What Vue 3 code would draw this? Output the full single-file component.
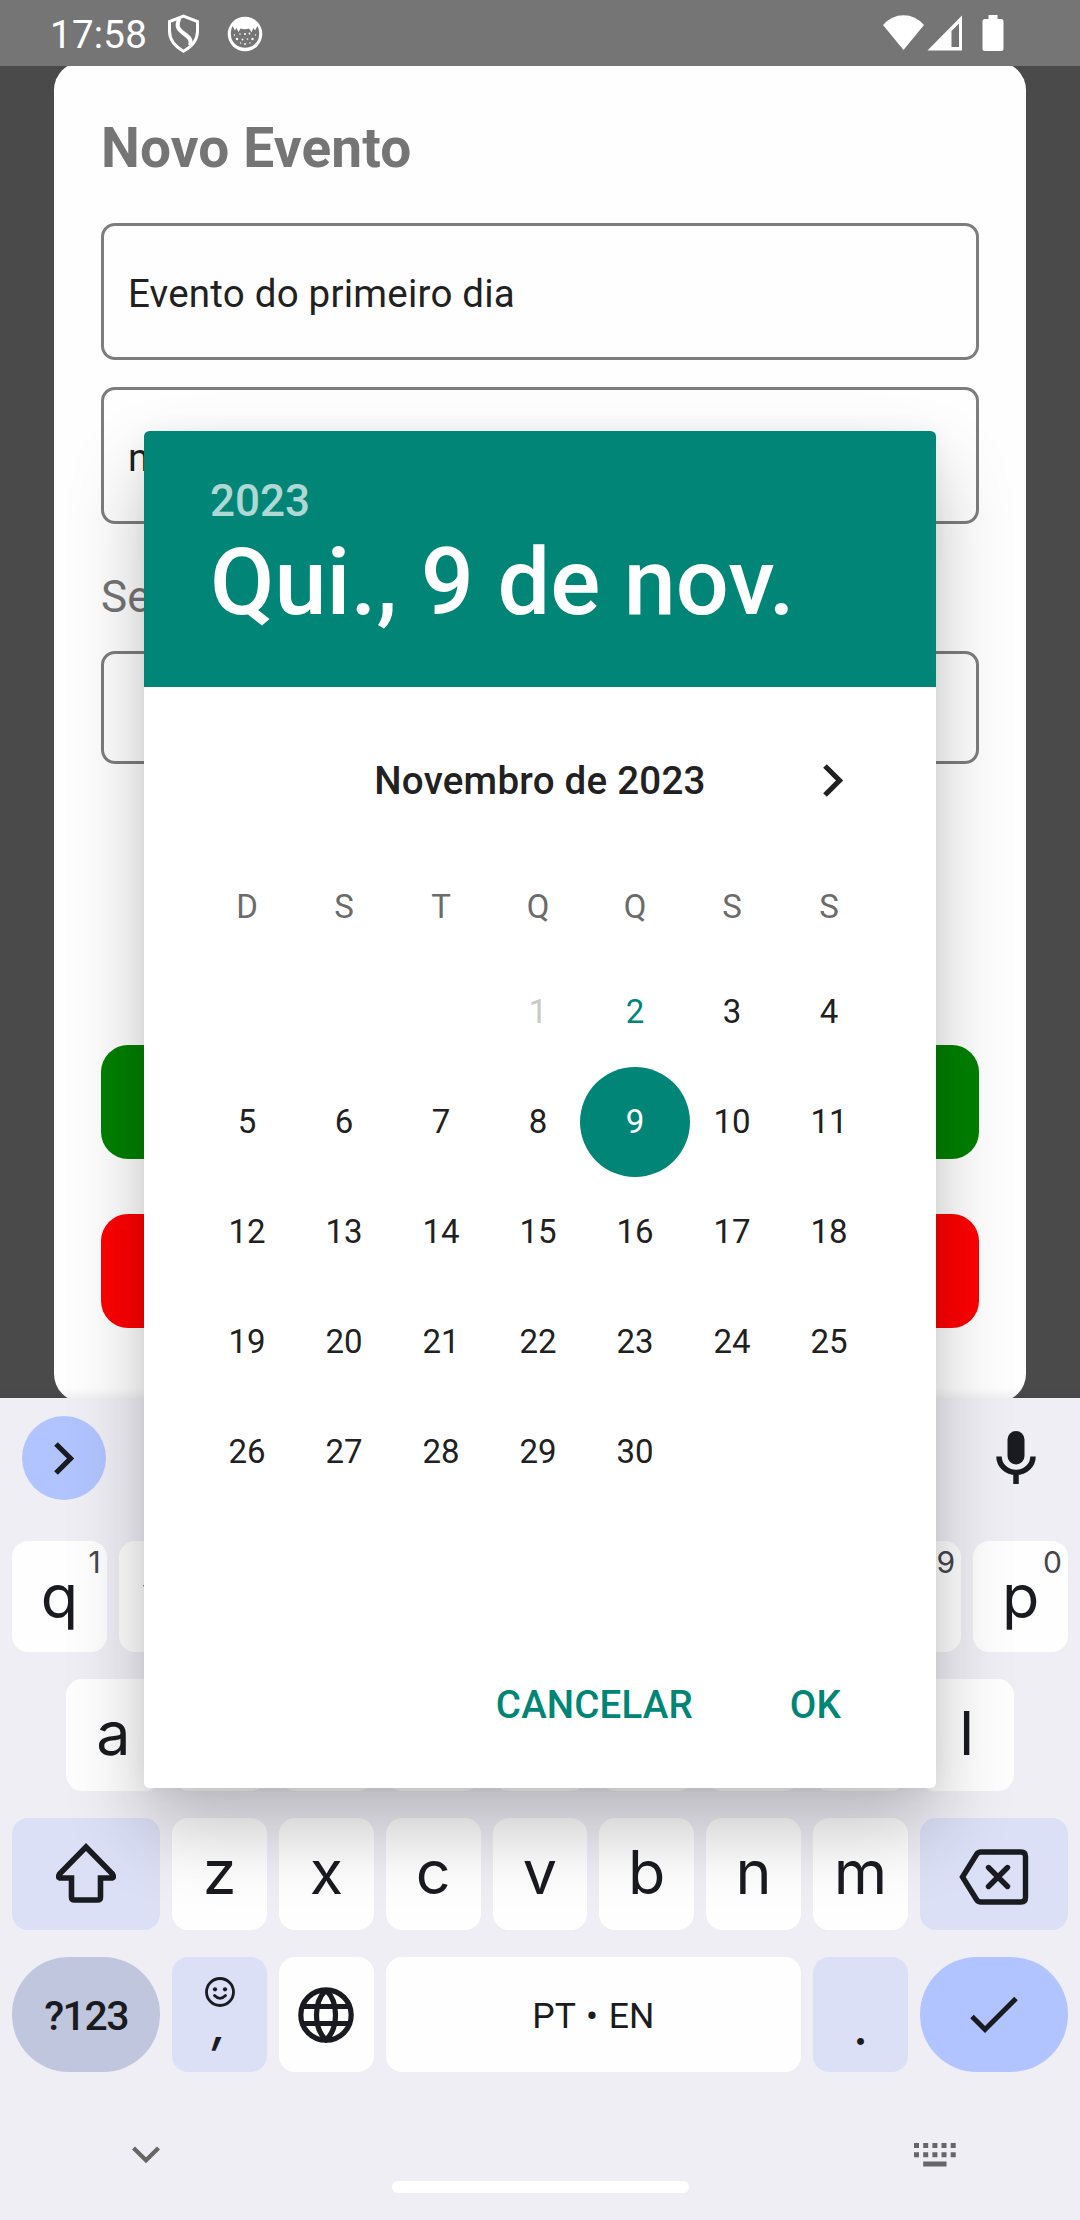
<script setup>
const weekdays = ['D', 'S', 'T', 'Q', 'Q', 'S', 'S']
const leadingBlanks = 3
const today = 2
const selected = 9
const days = Array.from({ length: 30 }, (_, i) => i + 1)

// Keys fully covered by the date dialog carry no label.
const topRow = [
  { letter: 'q', hint: '1' },
  { letter: 'w', hint: '' },
  ...Array.from({ length: 6 }, () => ({ letter: '', hint: '' })),
  { letter: '', hint: '9' },
  { letter: 'p', hint: '0' },
]
const middleRow = ['a', '', '', '', '', '', '', '', 'l']
const bottomRow = [...'zxcvbnm']
</script>

<template>
  <div class="screen">
    <header class="status">
      <span class="clock">17:58</span>
      <svg class="shield" width="33" height="39" viewBox="0 0 33 39" fill="none" stroke="#fff" stroke-width="3">
        <path d="M16.5 2.2 30.5 7.6V17c0 9-5.500 15.500-14 20.200C8 32.500 2.500 26 2.500 17V7.600Z" />
        <path d="M12.300 4.500C9.500 11 10 14.500 15.500 18.500c7 4.800 9.200 7 7.800 13" stroke-width="4" />
      </svg>
      <svg class="face" width="36" height="36" viewBox="0 0 36 36">
        <circle cx="18" cy="18" r="17.300" fill="#fff" />
        <path d="M5.500 10 8 14.500 9.500 12 11.500 16 13.500 12.500Q18 14 22 12.500L24.500 16 26.500 12 28 14.500 30.500 10A14.500 14.500 0 0 1 32 19 14 12.800 0 0 1 4 19 14.500 14.500 0 0 1 5.500 10Z" fill="#757575" />
        <g fill="#fff">
          <circle cx="10" cy="23" r="1.200" /><circle cx="13" cy="18" r="0.800" /><circle cx="18" cy="18" r="1" />
          <circle cx="22.500" cy="17.500" r="0.900" /><circle cx="25.500" cy="23" r="1.200" /><circle cx="15.500" cy="23.500" r="0.900" />
          <circle cx="20.500" cy="23" r="0.800" /><circle cx="18" cy="28" r="0.900" /><circle cx="13.500" cy="27" r="0.700" />
          <circle cx="23" cy="27" r="0.700" /><circle cx="7.500" cy="19" r="0.700" /><circle cx="28.500" cy="19" r="0.700" />
        </g>
      </svg>
      <svg class="signals" width="121" height="37" viewBox="0 0 121 37" fill="#fff">
        <path d="M0 10Q8.500.3 20.500.3T41 10L20.500 35Z" />
        <path fill-rule="evenodd" d="M79 .5V35.500H44.500ZM76 8.500 68.500 16V32H76Z" />
        <path d="M105.500 0h9v4h3.500a2.500 2.500 0 0 1 2.500 2.500v27a2.500 2.500 0 0 1-2.500 2.500h-16a2.500 2.500 0 0 1-2.500-2.500v-27a2.500 2.500 0 0 1 2.500-2.500h3.500Z" />
      </svg>
    </header>

    <main class="stage">
      <section class="card">
        <h1 class="title">Novo Evento</h1>
        <div class="field">Evento do primeiro dia</div>
        <div class="field">n</div>
        <p class="label">Se</p>
        <div class="field short"></div>
        <div class="action save"></div>
        <div class="action discard"></div>
      </section>
    </main>

    <section class="keyboard">
      <div class="toolbar">
        <span class="expand">
          <svg width="20" height="33" viewBox="0 0 20 33" fill="none" stroke="#1a1b20" stroke-width="5.200"><path d="M2 2 16.500 16.500 2 31" /></svg>
        </span>
        <svg class="mic" width="40" height="53" viewBox="0 0 40 53">
          <rect x="11.500" y="0" width="17" height="33.500" rx="8.500" fill="#1a1b20" />
          <path d="M3 25.500a17 16 0 0 0 34 0M20 42v11" fill="none" stroke="#1a1b20" stroke-width="5.500" />
        </svg>
      </div>
      <div class="keys first">
        <span v-for="(k, i) in topRow" :key="i" class="key">{{ k.letter }}<sup v-if="k.hint" class="hint">{{ k.hint }}</sup></span>
      </div>
      <div class="keys middle">
        <span v-for="(k, i) in middleRow" :key="i" class="key">{{ k }}</span>
      </div>
      <div class="keys">
        <span class="key wide tinted">
          <svg class="shift" width="62" height="60" viewBox="0 0 62 60" fill="none" stroke="#1a1b20" stroke-width="5.600">
            <path d="M31 4 57.500 31q2.500 3.800-1.500 4H45.500V54q0 3-3 3h-23q-3 0-3-3V35H6q-4-.2-1.500-4Z" />
          </svg>
        </span>
        <span v-for="k in bottomRow" :key="k" class="key">{{ k }}</span>
        <span class="key wide tinted">
          <svg class="erase" width="70" height="56" viewBox="0 0 70 56" fill="none" stroke="#1a1b20" stroke-width="5.400">
            <path d="M3.500 28 17.500 5.500Q19 3 22 3H62q4.500 0 4.500 4.500v41Q66.500 53 62 53H22q-3 0-4.500-2.500Z" />
            <path d="M29.500 18.500 48.500 37.500M48.500 18.500 29.500 37.500" stroke-linecap="round" />
          </svg>
        </span>
      </div>
      <div class="keys last">
        <span class="key wide symbols">?123</span>
        <span class="key tinted comma">
          <svg width="30" height="30" viewBox="0 0 30 30" fill="none" stroke="#1a1b20" stroke-width="2.800">
            <circle cx="15" cy="15" r="13.500" />
            <path d="M9.500 18.500q5.500 5.600 11 0" stroke-linecap="round" />
            <circle cx="10" cy="12.300" r="2.100" fill="#1a1b20" stroke="none" /><circle cx="20" cy="12.300" r="2.100" fill="#1a1b20" stroke="none" />
          </svg>
          <i class="glyph">,</i>
        </span>
        <span class="key">
          <svg width="56" height="56" viewBox="0 0 56 56" fill="none" stroke="#1a1b20" stroke-width="5.200">
            <circle cx="28" cy="28" r="25.200" />
            <path d="M4 19.500H52M4 36.500H52M28 3Q18.500 12 18.500 28T28 53Q37.500 44 37.500 28T28 3" />
          </svg>
        </span>
        <span class="key space">PT • EN</span>
        <span class="key tinted period"><i class="glyph">.</i></span>
        <span class="key wide enter">
          <svg width="48" height="38" viewBox="0 0 48 38" fill="none" stroke="#1a1b20" stroke-width="5"><path d="M2 20.500 15 33.500 46 2.500" /></svg>
        </span>
      </div>
      <footer class="nav">
        <svg class="collapse" width="28" height="18" viewBox="0 0 28 18" fill="none" stroke="#666" stroke-width="4.200"><path d="M1.500 2 14 14.300 26.500 2" /></svg>
        <span class="handle"></span>
        <svg class="switcher" width="42" height="24" viewBox="0 0 42 24" fill="#666">
          <path d="M0 0h5v5H0ZM9.200 0h5v5h-5ZM18.400 0h5v5h-5ZM27.500 0h5v5h-5ZM36.700 0h5v5h-5ZM0 9.300h5v5H0ZM9.200 9.300h5v5h-5ZM18.400 9.300h5v5h-5ZM27.500 9.300h5v5h-5ZM36.700 9.300h5v5h-5ZM9.200 18.500H32.500v5H9.200Z" />
        </svg>
      </footer>
    </section>

    <section class="dialog">
      <header class="banner">
        <div class="year">2023</div>
        <div class="date">Qui., 9 de nov.</div>
      </header>
      <div class="month">
        <span>Novembro de 2023</span>
        <svg class="next" width="21" height="33" viewBox="0 0 21 33" fill="none" stroke="#212121" stroke-width="5.200"><path d="M2 2 16.500 16.500 2 31" /></svg>
      </div>
      <div class="grid weekdays">
        <span v-for="(d, i) in weekdays" :key="i">{{ d }}</span>
      </div>
      <div class="grid days">
        <span v-for="b in leadingBlanks" :key="'b' + b"></span>
        <span v-for="d in days" :key="d" :class="{ past: d < today, today: d === today, selected: d === selected }">{{ d }}</span>
      </div>
      <div class="buttons">
        <span>CANCELAR</span>
        <span>OK</span>
      </div>
    </section>
  </div>
</template>

<style>
body {
  margin: 0;
  background: #4a4a4a;
}
</style>

<style scoped>
.screen {
  position: relative;
  display: flex;
  flex-direction: column;
  width: 1080px;
  height: 2220px;
  overflow: hidden;
  background: #4a4a4a;
  font-family: Roboto, sans-serif;
  color: #212121;
}
.screen * {
  box-sizing: border-box;
}
svg {
  display: block;
  flex: none;
}
.status {
  display: flex;
  height: 66px;
  padding-left: 50px;
  background: #757575;
  color: #fff;
}
.clock {
  width: 117px;
  font-size: 38.5px;
  line-height: 69px;
  letter-spacing: 0.25px;
}
.shield {
  margin-top: 14px;
}
.face {
  margin: 16px 0 0 27px;
}
.signals {
  margin: 15px 76px 0 auto;
}
.stage {
  position: relative;
  height: 1332px;
  overflow: hidden;
}
.stage::after {
  content: '';
  position: absolute;
  inset: auto 0 0;
  height: 10px;
  background: linear-gradient(transparent, rgba(0, 0, 0, 0.05));
}
.card {
  display: flex;
  flex-direction: column;
  height: 1340px;
  margin: -4px 54px 0;
  padding: 54px 47px 0;
  border-radius: 28px;
  background: #fefefe;
}
.title {
  margin: 0 0 43px;
  font-size: 55px;
  line-height: 64px;
  font-weight: 700;
  letter-spacing: 0.15px;
  color: #757575;
}
.field {
  height: 137px;
  margin-bottom: 27px;
  padding: 4px 24px 0;
  border: 3px solid #7d7d7d;
  border-radius: 14px;
  font-size: 38.5px;
  line-height: 128px;
  letter-spacing: 0.22px;
}
.label {
  margin: 20px 0 28px;
  font-size: 44px;
  line-height: 52px;
  color: #757575;
}
.field.short {
  height: 113px;
  margin-bottom: 281px;
}
.action {
  height: 114px;
  margin-bottom: 55px;
  border-radius: 27px;
}
.save {
  background: #008000;
}
.discard {
  background: #ff0000;
}

.keyboard {
  height: 822px;
  background: #efeef5;
  color: #1a1b20;
  font-family: Inter, Roboto, sans-serif;
}
.toolbar {
  display: flex;
  justify-content: space-between;
  height: 143px;
  padding: 18px 44px 0 22px;
}
.expand {
  display: grid;
  place-items: center;
  width: 84px;
  height: 84px;
  border-radius: 50%;
  background: #b2c4ff;
}
.mic {
  margin-top: 15px;
}
.keys {
  display: flex;
  gap: 12px;
  height: 112px;
  margin-bottom: 27px;
  padding: 0 12px;
}
.keys.first {
  height: 111px;
}
.keys.middle {
  padding: 0 66px;
}
.keys.last {
  height: 115px;
  margin: 0;
}
.key {
  position: relative;
  display: flex;
  align-items: center;
  justify-content: center;
  flex: 1 1 0;
  padding-bottom: 4px;
  border-radius: 16px;
  background: #fefefe;
  font-size: 61px;
  line-height: 1;
}
.key svg {
  position: relative;
  top: 2px;
}
.first .key {
  padding-bottom: 0;
}
.hint {
  position: absolute;
  top: 5px;
  right: 6px;
  font-size: 30px;
  line-height: 32px;
  color: #45464b;
}
.key.wide {
  flex: 0 0 148.2px;
}
.tinted {
  background: #dce0f7;
}
.key .erase {
  top: 5px;
}
.key .shift {
  top: 1px;
}
.last .key {
  padding: 0;
}
.last .key svg {
  top: 0;
}
.last .symbols {
  padding-top: 4px;
  border-radius: 57px;
  background: #c0c6dd;
  font-family: Roboto, sans-serif;
  font-size: 41px;
  font-weight: 500;
  letter-spacing: -1.5px;
}
.last .comma {
  flex-direction: column;
  justify-content: flex-start;
  padding-top: 20px;
}
.glyph {
  font-size: 48px;
  line-height: 40px;
  font-weight: 500;
  font-style: italic;
}
.comma .glyph {
  margin-top: -2px;
}
.period .glyph {
  margin-top: 26px;
  font-style: normal;
}
.key.space {
  flex: 0 0 415.600px;
  padding-top: 4px;
  font-family: Roboto, sans-serif;
  font-size: 35.5px;
  word-spacing: 2px;
}
.last .enter {
  border-radius: 57px;
  background: #b2c4ff;
}
.nav {
  display: flex;
  justify-content: space-between;
  align-items: flex-start;
  height: 148px;
  padding: 0 124px 0 132px;
}
.collapse {
  margin-top: 74px;
}
.handle {
  width: 297px;
  height: 12px;
  margin: 109px 0 0 6px;
  border-radius: 6px;
  background: #fff;
}
.switcher {
  margin-top: 71px;
}

.dialog {
  position: absolute;
  left: 144px;
  top: 431px;
  display: flex;
  flex-direction: column;
  width: 792px;
  height: 1357px;
  overflow: hidden;
  border-radius: 5.5px;
  background: #fff;
  box-shadow: 0 40px 78px rgba(0, 0, 0, 0.23), 0 0 22px rgba(0, 0, 0, 0.05);
}
.banner {
  height: 256px;
  padding: 44px 0 0 66px;
  background: #008577;
  color: #fff;
  font-weight: 500;
}
.year {
  font-size: 44px;
  line-height: 52px;
  color: rgba(255, 255, 255, 0.7);
}
.date {
  font-size: 93.5px;
  line-height: 110px;
  letter-spacing: 0.08px;
  white-space: nowrap;
}
.month {
  position: relative;
  height: 100px;
  margin: 44px 0 25px;
  font-size: 38.5px;
  line-height: 100px;
  font-weight: 500;
  letter-spacing: 0.25px;
  text-align: center;
}
.next {
  position: absolute;
  top: 33px;
  right: 92px;
}
.grid {
  display: grid;
  grid-template-columns: repeat(7, 97px);
  justify-content: center;
  justify-items: center;
  padding-right: 4px;
  font-size: 33px;
  line-height: 110px;
}
.weekdays {
  line-height: 101px;
  color: #6b6b6b;
}
.days {
  padding-right: 17px;
  justify-items: start;
}
.days span {
  width: 110px;
  height: 110px;
  text-align: center;
}
.days .past {
  color: #c8c8c8;
}
.days .today {
  color: #008577;
}
.days .selected {
  border-radius: 50%;
  background: #008577;
  color: #fff;
}
.buttons {
  display: flex;
  justify-content: flex-end;
  gap: 97px;
  margin: auto 95px 50px 0;
  font-size: 38.5px;
  line-height: 66px;
  font-weight: 500;
  letter-spacing: 0.15px;
  color: #008577;
}
</style>
